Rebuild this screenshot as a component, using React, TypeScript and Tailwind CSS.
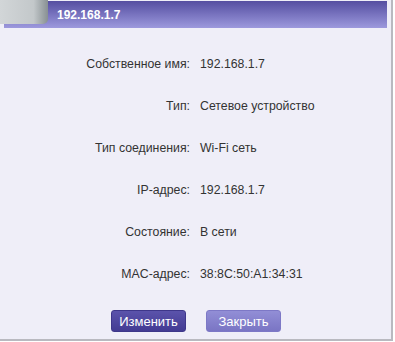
const rows = [
  { label: "Собственное имя:", value: "192.168.1.7" },
  { label: "Тип:", value: "Сетевое устройство" },
  { label: "Тип соединения:", value: "Wi-Fi сеть" },
  { label: "IP-адрес:", value: "192.168.1.7" },
  { label: "Состояние:", value: "В сети" },
  { label: "MAC-адрес:", value: "38:8C:50:A1:34:31" },
];

export default function App() {
  return (
    <div className="w-[395px] h-[342px] bg-white font-['Liberation_Sans',Arial,sans-serif]">
      <div className="relative w-[393px] h-[341px] bg-[#efeef8] border-r-2 border-b-2 border-[#b9b9c0] pl-[4px] pr-[4px] pt-[1px] flex flex-col">
        {/* Title bar */}
        <div className="h-[27px] bg-gradient-to-b from-[#564ea1] to-[#9d99dd] flex items-center pl-[53px]">
          <span className="text-white font-bold text-[12px]">192.168.1.7</span>
        </div>
        {/* gray tab over the title */}
        <div className="absolute left-0 top-0 w-[48px] h-[24px] rounded-br-[5px] bg-gradient-to-r from-[#d2d6d8] via-[#c3c8ca] via-70% to-[#889093]" />

        {/* Info rows */}
        <div className="mt-[15px] flex flex-col">
          {rows.map((row, i) => (
            <div key={i} className="h-[42px] flex items-center text-[12.3px] text-[#333333]">
              <span className="w-[186px] text-right">{row.label}</span>
              <span className="ml-[10px]">{row.value}</span>
            </div>
          ))}
        </div>

        {/* Buttons */}
        <div className="mt-[15px] flex justify-center gap-[20px] pl-[1px]">
          <button className="w-[75px] h-[22px] rounded-[3px] bg-gradient-to-b from-[#5b53ab] to-[#433b93] border border-[#3e378a] text-white text-[13px] leading-none">
            Изменить
          </button>
          <button className="w-[75px] h-[22px] rounded-[3px] bg-gradient-to-b from-[#928ed6] to-[#7a75c4] border border-[#7d78c6] text-white text-[13px] leading-none">
            Закрыть
          </button>
        </div>
      </div>
    </div>
  );
}
